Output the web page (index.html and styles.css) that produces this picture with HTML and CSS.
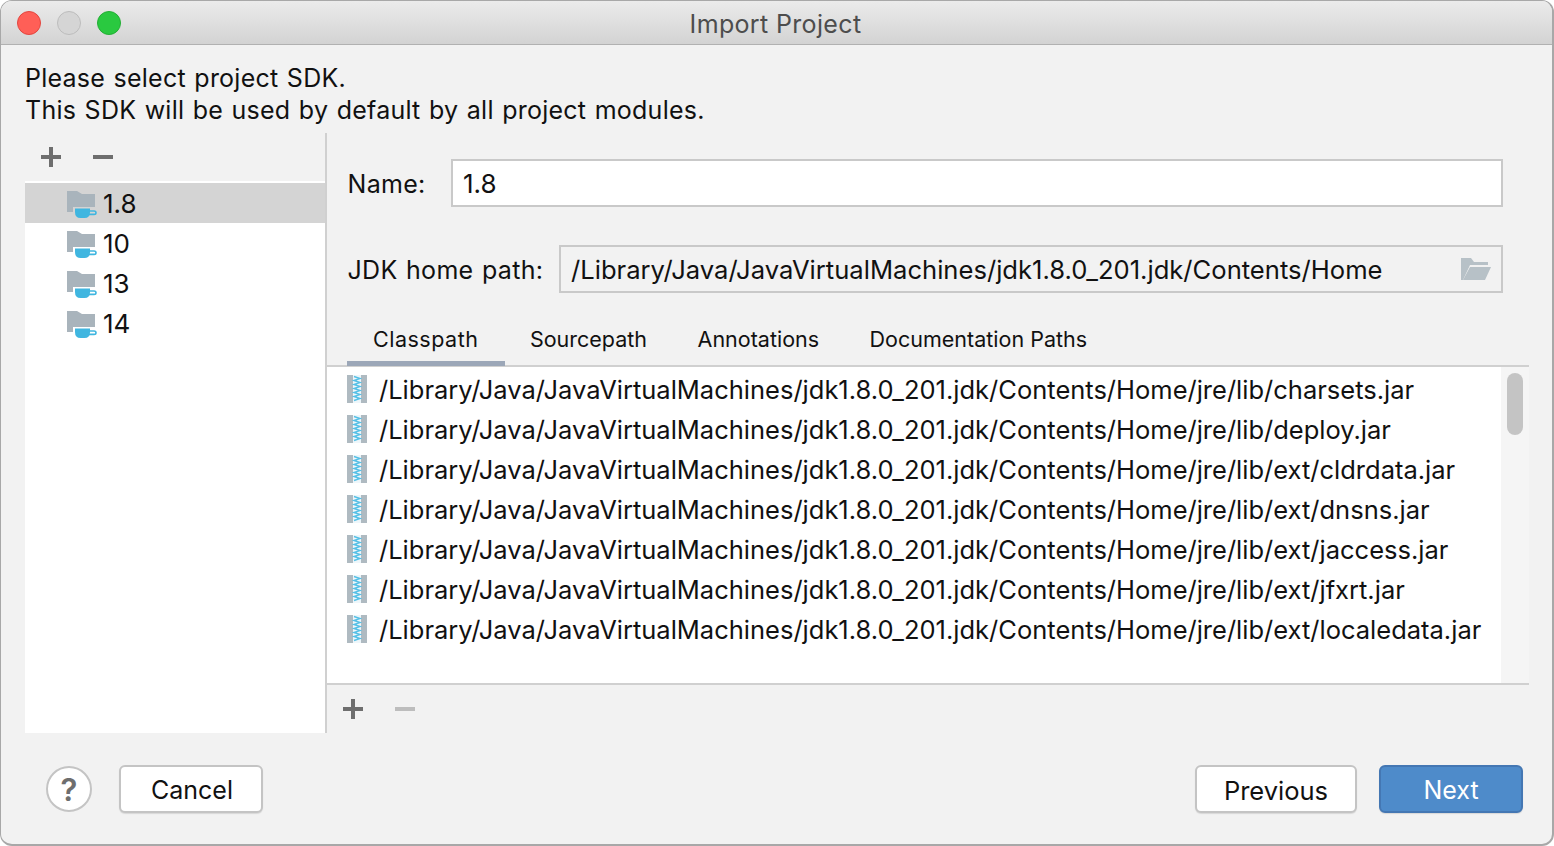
FILE: index.html
```html
<!DOCTYPE html>
<html lang="en">
<head>
<meta charset="utf-8">
<title>Import Project</title>
<link rel="stylesheet" href="styles.css">
</head>
<body>
<svg class="defs" width="0" height="0" aria-hidden="true">
  <symbol id="jdk" viewBox="0 0 30 28">
    <path d="M0 0h10l5 3h13v13H6v5H0z" fill="#a9b4bc"/>
    <path d="M8 17.500h15v3.500q0 6-5.500 6h-4q-5.500 0-5.500-6z" fill="#40b6e0"/>
    <path d="M22.500 20h4.500q2 0 2 1.700t-2 1.700h-5" fill="none" stroke="#40b6e0" stroke-width="1.600"/>
  </symbol>
  <symbol id="jar" viewBox="0 0 20 28">
    <path d="M0 0h6v28H0zM14 0h6v28h-6z" fill="#afbac1"/>
    <path d="M6 0h8v28H6z" fill="#eef6fa"/>
    <path d="M7 1.500l6 2-6 2 6 2-6 2 6 2-6 2 6 2-6 2 6 2-6 2 6 2-6 2" fill="none" stroke="#55c0e6" stroke-width="1.400"/>
  </symbol>
</svg>
<main class="window">
  <header class="titlebar">
    <div class="lights">
      <span class="light red"></span>
      <span class="light gray"></span>
      <span class="light green"></span>
    </div>
    <h1 class="title">Import Project</h1>
  </header>
  <div class="content">
    <p class="intro">Please select project SDK.<br>This SDK will be used by default by all project modules.</p>
    <div class="split">
      <aside class="sdk-pane">
        <div class="toolbar sdk-toolbar">
          <svg class="tool-icon" viewBox="0 0 22 22"><path d="M9 1h4v8h8v4h-8v8H9v-8H1V9h8z" fill="#6e6e6e"/></svg>
          <svg class="tool-icon" viewBox="0 0 22 22"><path d="M1 9h20v4H1z" fill="#6e6e6e"/></svg>
        </div>
        <ul class="sdk-list">
          <li class="sdk-row selected"><svg class="sdk-icon"><use href="#jdk"/></svg>1.8</li>
          <li class="sdk-row"><svg class="sdk-icon"><use href="#jdk"/></svg>10</li>
          <li class="sdk-row"><svg class="sdk-icon"><use href="#jdk"/></svg>13</li>
          <li class="sdk-row"><svg class="sdk-icon"><use href="#jdk"/></svg>14</li>
        </ul>
      </aside>
      <section class="detail">
        <div class="field name-field">
          <label class="field-label name-label">Name:</label>
          <div class="input">1.8</div>
        </div>
        <div class="field path-field">
          <label class="field-label path-label">JDK home path:</label>
          <div class="input readonly">
            <span class="path-text">/Library/Java/JavaVirtualMachines/jdk1.8.0_201.jdk/Contents/Home</span>
            <svg class="browse-icon" viewBox="0 0 30 22"><path d="M0 0h10l3 4h14v3H9L2 22H0z" fill="#b7c1c7"/><path d="M9 9h21l-6 13H2z" fill="#b7c1c7"/></svg>
          </div>
        </div>
        <nav class="tabs">
          <span class="tab active">Classpath</span>
          <span class="tab">Sourcepath</span>
          <span class="tab">Annotations</span>
          <span class="tab">Documentation Paths</span>
        </nav>
        <div class="paths">
          <ul class="path-list">
            <li class="path-row"><svg class="jar-icon"><use href="#jar"/></svg>/Library/Java/JavaVirtualMachines/jdk1.8.0_201.jdk/Contents/Home/jre/lib/charsets.jar</li>
            <li class="path-row"><svg class="jar-icon"><use href="#jar"/></svg>/Library/Java/JavaVirtualMachines/jdk1.8.0_201.jdk/Contents/Home/jre/lib/deploy.jar</li>
            <li class="path-row"><svg class="jar-icon"><use href="#jar"/></svg>/Library/Java/JavaVirtualMachines/jdk1.8.0_201.jdk/Contents/Home/jre/lib/ext/cldrdata.jar</li>
            <li class="path-row"><svg class="jar-icon"><use href="#jar"/></svg>/Library/Java/JavaVirtualMachines/jdk1.8.0_201.jdk/Contents/Home/jre/lib/ext/dnsns.jar</li>
            <li class="path-row"><svg class="jar-icon"><use href="#jar"/></svg>/Library/Java/JavaVirtualMachines/jdk1.8.0_201.jdk/Contents/Home/jre/lib/ext/jaccess.jar</li>
            <li class="path-row"><svg class="jar-icon"><use href="#jar"/></svg>/Library/Java/JavaVirtualMachines/jdk1.8.0_201.jdk/Contents/Home/jre/lib/ext/jfxrt.jar</li>
            <li class="path-row"><svg class="jar-icon"><use href="#jar"/></svg>/Library/Java/JavaVirtualMachines/jdk1.8.0_201.jdk/Contents/Home/jre/lib/ext/localedata.jar</li>
          </ul>
          <div class="scroll-track"><div class="scroll-thumb"></div></div>
        </div>
        <div class="toolbar path-toolbar">
          <svg class="tool-icon" viewBox="0 0 22 22"><path d="M9 1h4v8h8v4h-8v8H9v-8H1V9h8z" fill="#6e6e6e"/></svg>
          <svg class="tool-icon" viewBox="0 0 22 22"><path d="M1 9h20v4H1z" fill="#bdbdbd"/></svg>
        </div>
      </section>
    </div>
    <footer class="footer">
      <button class="help" type="button">?</button>
      <button class="btn cancel" type="button">Cancel</button>
      <span class="spacer"></span>
      <button class="btn previous" type="button">Previous</button>
      <button class="btn primary" type="button">Next</button>
    </footer>
  </div>
</main>
</body>
</html>
```
FILE: styles.css
```css
* { box-sizing: border-box; }
html, body { margin: 0; padding: 0; height: 100%; background: #fff; }
body { font-family: Inter, "Noto Sans", sans-serif; color: #111; overflow: hidden; }
.defs { position: absolute; }
.window {
  width: 1554px; height: 846px; display: flex; flex-direction: column;
  background: #f2f2f2; border: 1px solid #a8a8a8; border-width: 1px 2px 2px 1px;
  border-radius: 12px; overflow: hidden;
}
.titlebar {
  height: 44px; flex: none; display: flex; align-items: center; position: relative;
  background: linear-gradient(#ebebeb, #d3d3d3); border-bottom: 1px solid #b1b1b1;
}
.lights { display: flex; gap: 16px; padding-left: 16px; }
.light { width: 24px; height: 24px; border-radius: 50%; border: 1px solid; }
.red { background: #ff5f57; border-color: #e2463f; }
.gray { background: #d5d5d5; border-color: #bcbcbc; }
.green { background: #2ac940; border-color: #24ae35; }
.title {
  position: absolute; left: 0; right: 0; top: 0; margin: 0; text-align: center;
  font-size: 25px; font-weight: 400; line-height: 46px; color: #4d4d4d; padding-right: 2px;
  letter-spacing: .35px;
}
.content { flex: 1; display: flex; flex-direction: column; padding: 17px 0 0 24px; min-height: 0; }
.intro { margin: 0; font-size: 25px; line-height: 32px; height: 71px; letter-spacing: .24px; word-spacing: 1.2px; }
.split { display: flex; height: 600px; flex: none; }
.sdk-pane { width: 302px; flex: none; display: flex; flex-direction: column; border-right: 2px solid #d0d0d0; }
.toolbar { display: flex; align-items: center; gap: 30px; }
.sdk-toolbar { height: 48px; padding: 0 0 0 15px; }
.tool-icon { width: 22px; height: 22px; flex: none; }
.sdk-list { margin: 0; padding: 2px 0 0; list-style: none; background: #fff; flex: 1; }
.sdk-row { height: 40px; display: flex; align-items: center; padding-left: 42px; font-size: 26px; gap: 6px; }
.sdk-row.selected { background: #d4d4d4; }
.sdk-icon { width: 30px; height: 28px; flex: none; margin-top: 4px; }
.detail { flex: 1; display: flex; flex-direction: column; padding-top: 26px; min-width: 0; margin-right: 23px; }
.field { display: flex; align-items: center; height: 48px; padding-left: 20.5px; margin-right: 26px; }
.name-field { margin-bottom: 38px; }
.field-label { font-size: 25px; letter-spacing: .3px; word-spacing: 1.2px; flex: none; padding-top: 2px; }
.name-label { width: 103.5px; }
.path-label { width: 211.5px; }
.input {
  flex: 1; height: 48px; display: flex; align-items: center; justify-content: space-between;
  border: 2px solid #c9c9c9; background: #fff; padding: 0 10px; font-size: 26px;
}
.input.readonly { background: #f2f2f2; }
.path-text { font-size: 25.6px; }
.browse-icon { width: 30px; height: 22px; flex: none; }
.tabs { display: flex; margin-top: 27px; height: 47px; padding-left: 20px; border-bottom: 2px solid #d0d0d0; font-size: 21.5px; flex: none; }
.tab { height: 46px; padding: 0 25.5px 8px 25px; display: flex; align-items: center; }
.tab.active { padding: 0 26.5px 8px 26px; box-shadow: inset 0 -5px 0 #9ca7b8; letter-spacing: .5px; }
.paths { height: 316px; flex: none; display: flex; border-bottom: 2px solid #d0d0d0; box-sizing: content-box; }
.path-list { flex: 1; margin: 0; padding: 2px 0 0 20px; list-style: none; background: #fff; min-width: 0; }
.path-row { height: 40px; display: flex; align-items: center; gap: 12px; font-size: 25.5px; white-space: nowrap; }
.jar-icon { width: 20px; height: 28px; flex: none; }
.scroll-track { width: 28px; flex: none; background: #f5f5f5; padding: 6px 6px; }
.scroll-thumb { width: 16px; height: 62px; border-radius: 8px; background: #c4c4c4; }
.path-toolbar { height: 48px; padding-left: 15px; }
.footer { display: flex; align-items: center; height: 48px; margin-top: 32px; padding: 0 29px 0 21px; }
.help {
  width: 46px; height: 46px; border-radius: 50%; border: 2px solid #c4c4c4; background: #fff;
  font: 600 31px Inter, sans-serif; color: #6e6e6e; padding: 0; margin-right: 27px;
}
.btn {
  height: 48px; border-radius: 6px; border: 2px solid #c4c4c4; background: #fff;
  font: 400 25px Inter, sans-serif; color: #111; padding: 2px 0 0; box-shadow: 0 1px 1px #d8d8d8;
}
.cancel { width: 144px; padding-left: 2px; }
.previous { width: 162px; margin-right: 22px; font-size: 25.5px; }
.primary { width: 144px; background: #4e8bca; border-color: #4477b3; color: #fff; }
.spacer { flex: 1; }
```
